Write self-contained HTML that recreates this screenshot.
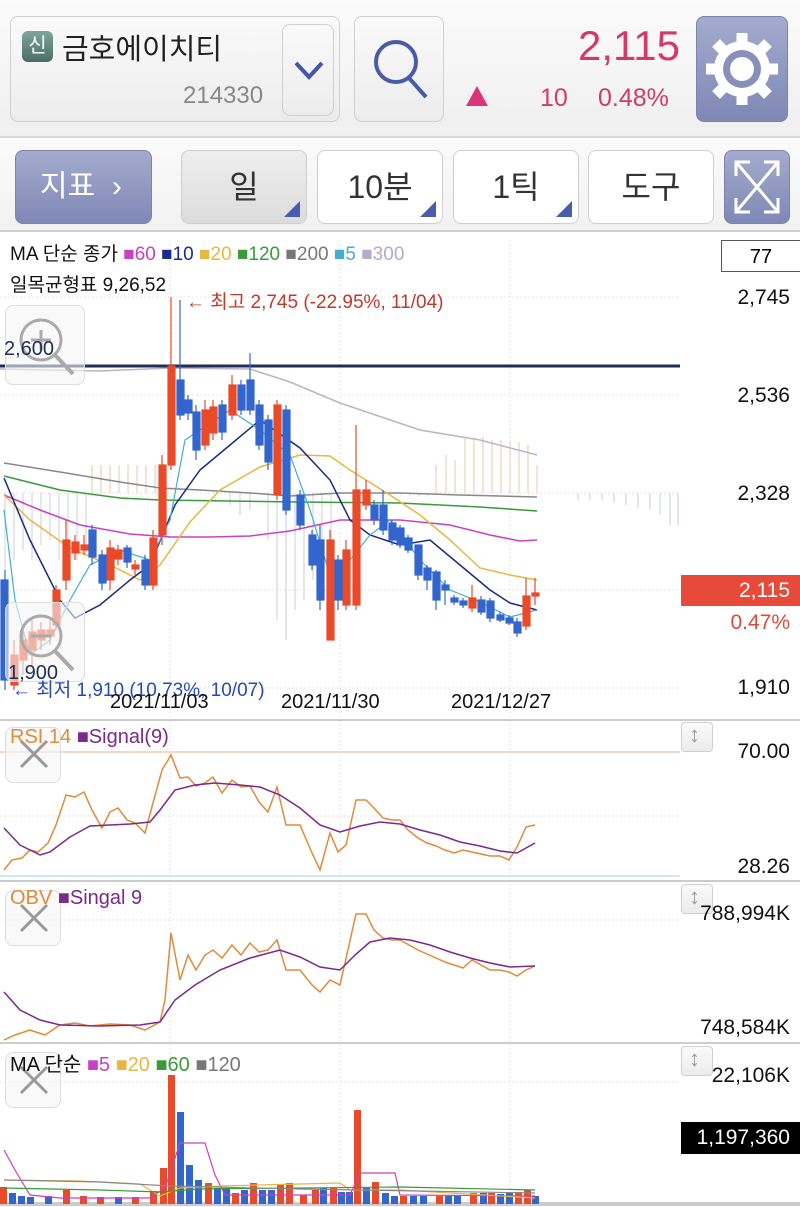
<!DOCTYPE html>
<html><head><meta charset="utf-8"><style>
*{margin:0;padding:0;box-sizing:border-box}
body{width:800px;height:1207px;overflow:hidden;background:#fff;font-family:"Liberation Sans","Noto Sans CJK KR",sans-serif;position:relative}
.a{position:absolute}
.btn{position:absolute;border:1px solid #cfcfcf;border-radius:8px;background:linear-gradient(#fafafa,#ececec)}
.bl{position:absolute;border-radius:8px;background:linear-gradient(#a4abcd,#7f88b5);border:1px solid #7c84ad}
.tb{font-size:32px;color:#333;text-align:center;line-height:72px}
.tri{position:absolute;right:6px;bottom:6px;width:0;height:0;border-left:16px solid transparent;border-bottom:16px solid #4a5cb0}
.r{position:absolute;right:10px;font-size:21px;color:#111;text-align:right}
.zb{position:absolute;left:5px;width:56px;height:56px;border:1px solid #ddd;border-radius:8px;background:rgba(245,245,245,.6)}
</style></head><body>
<div class="a" style="left:0;top:0;width:800px;height:138px;background:linear-gradient(#fbfbfb,#efefef);border-bottom:2px solid #d8d8d8"></div>
<div class="btn" style="left:10px;top:16px;width:330px;height:106px"></div>
<div class="a" style="left:22px;top:31px;width:31px;height:31px;border-radius:6px;background:linear-gradient(#7fa59a,#4b6e64);color:#fff;font-size:20px;text-align:center;line-height:31px">신</div>
<div class="a" style="left:62px;top:26px;font-size:29px;color:#222">금호에이치티</div>
<div class="a" style="left:183px;top:82px;font-size:24px;color:#888">214330</div>
<div class="btn" style="left:282px;top:24px;width:52px;height:92px"></div>
<svg class="a" style="left:292px;top:58px" width="34" height="26"><path d="M4 5 L17 19 L30 5" stroke="#4356a8" stroke-width="4" fill="none"/></svg>
<div class="btn" style="left:354px;top:16px;width:90px;height:106px"></div>
<svg class="a" style="left:368px;top:30px" width="70" height="80"><circle cx="28" cy="32" r="20" stroke="#4a5aa8" stroke-width="4" fill="none"/><line x1="41" y1="48" x2="58" y2="67" stroke="#4a5aa8" stroke-width="4"/></svg>
<div class="a" style="left:560px;top:22px;font-size:42px;color:#d33a6a;width:120px;text-align:right">2,115</div>
<div class="a" style="left:466px;top:86px;width:0;height:0;border-left:11px solid transparent;border-right:11px solid transparent;border-bottom:20px solid #d9357a"></div>
<div class="a" style="left:540px;top:84px;font-size:25px;color:#d33a6a">10</div>
<div class="a" style="left:598px;top:84px;font-size:25px;color:#d33a6a">0.48%</div>
<div class="bl" style="left:696px;top:16px;width:92px;height:106px"></div>
<svg class="a" style="left:700px;top:25px" width="84" height="88" viewBox="0 0 84 88"><g fill="#fff"><circle cx="42" cy="44" r="28"/><g stroke="#fff" stroke-width="11"><line x1="42" y1="8" x2="42" y2="80"/><line x1="6" y1="44" x2="78" y2="44"/><line x1="16" y1="18" x2="68" y2="70"/><line x1="68" y1="18" x2="16" y2="70"/></g></g><circle cx="42" cy="44" r="19" fill="#8790bb"/><circle cx="42" cy="44" r="12" fill="#fff"/></svg>

<div class="a" style="left:0;top:140px;width:800px;height:92px;background:linear-gradient(#fafafa,#f2f2f2);border-bottom:2px solid #d0d0d0"></div>
<div class="bl" style="left:15px;top:150px;width:137px;height:74px;color:#fff;font-size:30px;line-height:72px;padding-left:24px">지표 &nbsp;›</div>
<div class="btn tb" style="left:181px;top:150px;width:126px;height:74px;background:linear-gradient(#eee,#dcdcdc)">일<div class="tri"></div></div>
<div class="btn tb" style="left:317px;top:150px;width:126px;height:74px;background:#fff">10분<div class="tri"></div></div>
<div class="btn tb" style="left:453px;top:150px;width:126px;height:74px;background:#fff">1틱<div class="tri"></div></div>
<div class="btn tb" style="left:588px;top:150px;width:126px;height:74px;background:#fff">도구</div>
<div class="bl" style="left:724px;top:150px;width:66px;height:74px"></div>
<svg class="a" style="left:732px;top:158px" width="50" height="58"><g stroke="#fff" stroke-width="3" fill="none"><path d="M4 4L46 54M46 4L4 54M4 18V4H18M32 4H46V18M4 40V54H18M32 54H46V40"/></g></svg>

<svg class="a" style="left:0;top:233px" width="800" height="974" viewBox="0 233 800 974">
<g stroke="#e6e6e6" stroke-dasharray="2 2" stroke-width="1">
<line x1="0" y1="297" x2="680" y2="297"/><line x1="0" y1="395" x2="680" y2="395"/><line x1="0" y1="493" x2="680" y2="493"/><line x1="0" y1="590" x2="680" y2="590"/><line x1="0" y1="688" x2="680" y2="688"/>
<line x1="170" y1="240" x2="170" y2="1200"/><line x1="340" y1="240" x2="340" y2="1200"/><line x1="510" y1="240" x2="510" y2="1200"/>
<line x1="0" y1="816" x2="680" y2="816"/><line x1="0" y1="920" x2="680" y2="920"/><line x1="0" y1="1082" x2="680" y2="1082"/>
</g>
<line x1="0" y1="720" x2="800" y2="720" stroke="#999"/><line x1="0" y1="881" x2="800" y2="881" stroke="#999"/><line x1="0" y1="1043" x2="800" y2="1043" stroke="#999"/>
<line x1="0" y1="1204" x2="800" y2="1204" stroke="#ccc" stroke-width="4"/>
<line x1="0" y1="752" x2="680" y2="752" stroke="#f2d9c8" stroke-width="2"/>
<line x1="0" y1="876" x2="680" y2="876" stroke="#bde3f0" stroke-width="1.5"/>
<g stroke="#e8c9a8" stroke-width="1">
<path d="M92 465V493M101 465V493M110 465V493M119 465V493M128 465V493M137 465V493M146 465V493M155 465V493M401 495V493M410 496V493M419 496V493M428 496V493M465 437V493M474 437V493M483 437V493M492 440V493M501 440V493M510 442V493M519 442V493M528 445V493M537 465V493M436 465V493M446 455V493M455 460V493"/>
</g>
<g stroke="#c9cde0" stroke-width="1">
<path d="M5 493V590M14 493V560M23 493V550M32 493V560M41 493V545M50 493V540M59 493V560M68 493V550M77 493V560M86 493V555M230 493V505M240 493V515M250 493V510M268 493V540M277 493V620M286 493V640M295 493V610M304 493V600M313 493V580M322 493V560M331 493V600M578 493V500M590 493V500M602 493V500M614 493V503M626 493V505M638 493V508M650 493V510M660 493V515M670 493V525M678 493V525"/>
</g>
<polyline fill="none" stroke="#bbb3c9" stroke-width="1.5" points="0,369 100,371 170,368 250,369 290,382 340,403 420,430 480,440 537,455"/>
<polyline fill="none" stroke="#888" stroke-width="1.5" points="4,463 60,472 120,482 160,488 200,490 250,493 290,496 340,493 400,493 460,495 537,497"/>
<polyline fill="none" stroke="#3a9a3a" stroke-width="1.5" points="4,476 60,490 120,498 160,500 300,502 400,503 480,507 537,511"/>
<polyline fill="none" stroke="#c941c2" stroke-width="1.5" points="4,495 40,510 80,525 130,534 170,537 210,537 250,536 290,531 340,520 400,520 450,525 490,535 520,541 537,540"/>
<polyline fill="none" stroke="#e8b740" stroke-width="1.5" points="4,495 30,520 70,548 110,565 140,580 160,565 190,522 220,490 260,467 300,455 330,456 350,470 390,495 420,515 450,540 480,568 510,575 537,580"/>
<polyline fill="none" stroke="#1a2a80" stroke-width="1.5" points="4,478 30,540 60,600 75,618 100,605 130,580 150,565 175,505 200,470 230,445 260,420 300,448 330,480 350,520 370,535 400,545 430,540 460,565 490,590 510,603 537,610"/>
<polyline fill="none" stroke="#3fb0d0" stroke-width="1.2" points="4,510 15,600 30,655 50,640 70,600 90,565 120,550 150,560 170,520 185,440 200,430 230,410 260,430 290,455 310,510 330,575 350,560 370,535 390,520 420,560 450,590 480,602 510,617 537,610"/>
<line x1="0" y1="366" x2="680" y2="366" stroke="#1e2e55" stroke-width="3"/>
<g stroke-width="1.2">
<g fill="#e84a2a" stroke="#e84a2a">
<path d="M14 640V690M23 630V675M32 620V665M41 622V650M50 620V645M56 585V630M66 520V590M75 535V560M84 535V555M110 540V590M118 545V565M135 560V575M153 530V590M162 455V545M171 297V470M205 400V450M213 400V440M232 375V420M277 400V500M330 530V640M346 540V610M356 425V610M366 480V510M472 585V612M526 578V630M535 578V605"/>
<rect x="11" y="655" width="7" height="30"/><rect x="20" y="640" width="7" height="20"/><rect x="29" y="632" width="7" height="18"/><rect x="38" y="630" width="7" height="10"/><rect x="47" y="630" width="7" height="6"/><rect x="53" y="590" width="7" height="35"/><rect x="63" y="540" width="7" height="40"/><rect x="72" y="542" width="7" height="11"/><rect x="81" y="545" width="7" height="5"/><rect x="107" y="548" width="7" height="32"/><rect x="115" y="550" width="7" height="9"/><rect x="132" y="565" width="7" height="4"/><rect x="150" y="538" width="7" height="47"/><rect x="159" y="465" width="7" height="70"/><rect x="168" y="366" width="7" height="99"/><rect x="202" y="410" width="7" height="35"/><rect x="210" y="407" width="7" height="26"/><rect x="229" y="385" width="7" height="30"/><rect x="274" y="405" width="7" height="90"/><rect x="327" y="540" width="7" height="100"/><rect x="343" y="550" width="7" height="55"/><rect x="353" y="490" width="7" height="115"/><rect x="363" y="490" width="7" height="15"/><rect x="469" y="598" width="7" height="10"/><rect x="523" y="596" width="7" height="30"/><rect x="532" y="593" width="7" height="3"/>
</g>
<g fill="#3366cc" stroke="#3366cc">
<path d="M5 570V690M92 525V565M102 550V590M127 545V568M145 555V590M180 300V420M188 395V420M196 405V460M222 400V440M241 380V415M250 353V415M259 400V450M268 415V470M286 405V515M300 490V530M312 530V570M320 525V610M338 555V610M374 500V525M383 490V535M392 520V545M400 525V548M408 535V553M418 545V580M427 565V590M436 570V610M445 580V605M454 595V605M463 598V608M481 596V615M490 598V622M500 612V622M509 615V625M517 618V637"/>
<rect x="1" y="580" width="7" height="100"/><rect x="89" y="530" width="7" height="27"/><rect x="99" y="555" width="7" height="28"/><rect x="124" y="548" width="7" height="14"/><rect x="142" y="560" width="7" height="25"/><rect x="177" y="380" width="7" height="35"/><rect x="185" y="400" width="7" height="13"/><rect x="193" y="412" width="7" height="38"/><rect x="219" y="405" width="7" height="27"/><rect x="238" y="385" width="7" height="25"/><rect x="247" y="380" width="7" height="30"/><rect x="256" y="405" width="7" height="40"/><rect x="265" y="420" width="7" height="42"/><rect x="283" y="410" width="7" height="100"/><rect x="297" y="495" width="7" height="30"/><rect x="309" y="535" width="7" height="30"/><rect x="317" y="540" width="7" height="60"/><rect x="335" y="560" width="7" height="40"/><rect x="371" y="505" width="7" height="15"/><rect x="380" y="505" width="7" height="25"/><rect x="389" y="523" width="7" height="17"/><rect x="397" y="528" width="7" height="17"/><rect x="405" y="538" width="7" height="12"/><rect x="415" y="545" width="7" height="30"/><rect x="424" y="568" width="7" height="12"/><rect x="433" y="572" width="7" height="28"/><rect x="442" y="585" width="7" height="5"/><rect x="451" y="598" width="7" height="4"/><rect x="460" y="601" width="7" height="4"/><rect x="478" y="600" width="7" height="12"/><rect x="487" y="601" width="7" height="17"/><rect x="497" y="615" width="7" height="5"/><rect x="506" y="618" width="7" height="5"/><rect x="514" y="622" width="7" height="11"/>
</g>
</g>
<polyline fill="none" stroke="#e08a3a" stroke-width="1.5" points="4,870 12,860 22,858 30,850 38,852 48,843 56,825 66,795 75,797 84,792 92,810 102,828 110,812 118,808 127,820 135,823 145,833 153,803 162,770 171,755 180,778 188,777 196,786 205,783 213,777 222,793 232,780 241,787 250,786 259,802 268,812 277,787 286,825 300,825 312,853 320,870 330,833 338,852 346,845 356,800 366,800 374,808 383,818 392,820 400,820 408,830 418,838 427,843 436,846 445,850 454,853 463,850 472,852 481,854 490,856 500,856 509,860 517,847 526,827 535,825"/>
<polyline fill="none" stroke="#7a2a8a" stroke-width="1.5" points="4,828 20,845 40,855 50,852 70,837 90,826 110,825 130,824 150,822 160,810 175,790 195,785 215,783 240,785 260,787 280,795 300,808 320,825 340,832 360,826 380,822 400,824 420,830 440,835 460,842 480,846 500,851 517,853 535,843"/>
<polyline fill="none" stroke="#e08a3a" stroke-width="1.5" points="4,1040 15,1035 30,1030 45,1035 60,1025 75,1023 90,1026 110,1024 130,1025 145,1030 160,1022 165,1000 171,933 180,980 188,955 196,970 205,955 213,950 222,958 232,945 241,955 250,943 259,952 268,950 277,940 286,970 300,970 312,985 320,992 330,980 340,985 356,914 366,914 374,930 383,938 392,940 400,940 418,950 436,958 445,962 454,965 463,968 472,960 481,965 490,970 500,970 509,972 517,976 526,970 535,966"/>
<polyline fill="none" stroke="#7a2a8a" stroke-width="1.5" points="4,992 20,1010 40,1020 60,1025 100,1026 140,1025 160,1022 175,1000 195,985 220,970 250,958 280,950 300,957 320,967 340,970 355,955 370,942 390,938 410,940 430,945 450,952 470,958 490,963 510,967 535,966"/>
<g fill="#e84a2a"><rect x="0" y="1187" width="7" height="17"/><rect x="63" y="1190" width="7" height="14"/><rect x="80" y="1196" width="7" height="8"/><rect x="97" y="1197" width="7" height="7"/><rect x="132" y="1197" width="7" height="7"/><rect x="150" y="1191" width="7" height="13"/><rect x="160" y="1168" width="7" height="36"/><rect x="168" y="1075" width="7" height="129"/><rect x="205" y="1183" width="7" height="21"/><rect x="232" y="1193" width="7" height="11"/><rect x="250" y="1183" width="7" height="21"/><rect x="277" y="1185" width="7" height="19"/><rect x="286" y="1183" width="7" height="21"/><rect x="300" y="1195" width="7" height="9"/><rect x="312" y="1190" width="7" height="14"/><rect x="330" y="1188" width="7" height="16"/><rect x="354" y="1110" width="7" height="94"/><rect x="372" y="1182" width="7" height="22"/><rect x="400" y="1196" width="7" height="8"/><rect x="436" y="1196" width="7" height="8"/><rect x="470" y="1193" width="7" height="11"/><rect x="488" y="1193" width="7" height="11"/><rect x="515" y="1192" width="7" height="12"/><rect x="524" y="1190" width="7" height="14"/></g>
<g fill="#3366cc"><rect x="9" y="1193" width="7" height="11"/><rect x="18" y="1196" width="7" height="8"/><rect x="27" y="1197" width="7" height="7"/><rect x="45" y="1196" width="7" height="8"/><rect x="115" y="1197" width="7" height="7"/><rect x="177" y="1112" width="7" height="92"/><rect x="186" y="1165" width="7" height="39"/><rect x="195" y="1180" width="7" height="24"/><rect x="214" y="1188" width="7" height="16"/><rect x="223" y="1188" width="7" height="16"/><rect x="241" y="1190" width="7" height="14"/><rect x="259" y="1190" width="7" height="14"/><rect x="268" y="1190" width="7" height="14"/><rect x="320" y="1188" width="7" height="16"/><rect x="338" y="1192" width="7" height="12"/><rect x="346" y="1192" width="7" height="12"/><rect x="363" y="1188" width="7" height="16"/><rect x="382" y="1193" width="7" height="11"/><rect x="391" y="1196" width="7" height="8"/><rect x="410" y="1196" width="7" height="8"/><rect x="420" y="1196" width="7" height="8"/><rect x="445" y="1196" width="7" height="8"/><rect x="454" y="1196" width="7" height="8"/><rect x="480" y="1193" width="7" height="11"/><rect x="497" y="1194" width="7" height="10"/><rect x="506" y="1193" width="7" height="11"/><rect x="532" y="1196" width="7" height="8"/></g>
<polyline fill="none" stroke="#c941c2" stroke-width="1.2" points="4,1150 15,1170 30,1195 60,1198 100,1198 150,1198 165,1188 180,1143 205,1143 215,1175 225,1195 350,1195 360,1173 395,1173 400,1195 535,1196"/>
<polyline fill="none" stroke="#e8b740" stroke-width="1.2" points="4,1180 80,1181 140,1184 160,1196 180,1188 220,1186 340,1183 350,1190 400,1190 535,1198"/>
<polyline fill="none" stroke="#3a9a3a" stroke-width="1.2" points="4,1188 100,1190 160,1192 200,1189 400,1187 535,1190"/>
<polyline fill="none" stroke="#888" stroke-width="1.2" points="4,1180 100,1182 170,1186 300,1189 535,1193"/>
</svg>

<div class="zb" style="top:305px;width:80px;height:80px"></div>
<svg class="a" style="left:15px;top:312px" width="62" height="66"><circle cx="26" cy="28" r="20" stroke="#aaa" stroke-width="3" fill="none"/><line x1="40" y1="43" x2="58" y2="62" stroke="#aaa" stroke-width="4"/><line x1="26" y1="18" x2="26" y2="38" stroke="#aaa" stroke-width="3"/><line x1="16" y1="28" x2="36" y2="28" stroke="#aaa" stroke-width="3"/></svg>
<div class="zb" style="top:602px;width:80px;height:80px"></div>
<svg class="a" style="left:15px;top:608px" width="62" height="66"><circle cx="26" cy="28" r="20" stroke="#aaa" stroke-width="3" fill="none"/><line x1="40" y1="43" x2="58" y2="62" stroke="#aaa" stroke-width="4"/><line x1="16" y1="28" x2="36" y2="28" stroke="#aaa" stroke-width="3"/></svg>
<div class="zb" style="top:727px"></div><div class="zb" style="top:890px"></div><div class="zb" style="top:1052px"></div>
<svg class="a" style="left:18px;top:738px" width="32" height="32"><path d="M3 3L29 29M29 3L3 29" stroke="#999" stroke-width="3"/></svg>
<svg class="a" style="left:18px;top:902px" width="32" height="32"><path d="M3 3L29 29M29 3L3 29" stroke="#999" stroke-width="3"/></svg>
<svg class="a" style="left:18px;top:1064px" width="32" height="32"><path d="M3 3L29 29M29 3L3 29" stroke="#999" stroke-width="3"/></svg>
<div class="btn" style="left:681px;top:722px;width:32px;height:30px;border-radius:4px"></div>
<div class="btn" style="left:681px;top:884px;width:32px;height:30px;border-radius:4px"></div>
<div class="btn" style="left:681px;top:1046px;width:32px;height:30px;border-radius:4px"></div>
<div class="a" style="left:689px;top:722px;font-size:22px;color:#999">↕</div>
<div class="a" style="left:689px;top:884px;font-size:22px;color:#999">↕</div>
<div class="a" style="left:689px;top:1046px;font-size:22px;color:#999">↕</div>

<div class="a" style="left:10px;top:239px;font-size:19px;color:#111;white-space:nowrap">MA 단순 종가 <span style="color:#c941c2">■60</span> <span style="color:#1a2a90">■10</span> <span style="color:#e8b740">■20</span> <span style="color:#3a9a3a">■120</span> <span style="color:#777">■200</span> <span style="color:#3fb0d0">■5</span> <span style="color:#b4aacb">■300</span></div>
<div class="a" style="left:10px;top:270px;font-size:19px;color:#111">일목균형표 9,26,52</div>
<div class="a" style="left:186px;top:287px;font-size:19px;color:#c0392b;white-space:nowrap">← 최고 2,745 (-22.95%, 11/04)</div>
<div class="a" style="left:4px;top:338px;font-size:20px;color:#1e2e55">2,600</div>
<div class="a" style="left:8px;top:662px;font-size:20px;color:#1e2e55">1,900</div>
<div class="a" style="left:12px;top:675px;font-size:19px;color:#2748b8;white-space:nowrap">← 최저 1,910 (10.73%, 10/07)</div>
<div class="a" style="left:110px;top:691px;font-size:20px;color:#111">2021/11/03</div>
<div class="a" style="left:281px;top:691px;font-size:20px;color:#111">2021/11/30</div>
<div class="a" style="left:451px;top:691px;font-size:20px;color:#111">2021/12/27</div>
<div class="a" style="left:10px;top:726px;font-size:20px;color:#e08a3a">RSI 14 <span style="color:#7a2a8a">■Signal(9)</span></div>
<div class="a" style="left:10px;top:887px;font-size:20px;color:#e08a3a">OBV <span style="color:#7a2a8a">■Singal 9</span></div>
<div class="a" style="left:10px;top:1048px;font-size:20px;color:#111">MA 단순 <span style="color:#c941c2">■5</span> <span style="color:#e8b740">■20</span> <span style="color:#3a9a3a">■60</span> <span style="color:#777">■120</span></div>

<div class="a" style="left:721px;top:240px;width:80px;height:32px;border:1px solid #555;font-size:20px;text-align:center;line-height:32px">77</div>
<div class="r" style="top:286px">2,745</div>
<div class="r" style="top:384px">2,536</div>
<div class="r" style="top:482px">2,328</div>
<div class="a" style="left:681px;top:575px;width:119px;height:31px;background:#e84a3a;color:#fff;font-size:21px;text-align:right;padding-right:10px;line-height:31px">2,115</div>
<div class="r" style="top:611px;color:#e0483a">0.47%</div>
<div class="r" style="top:676px">1,910</div>
<div class="r" style="top:740px">70.00</div>
<div class="r" style="top:855px">28.26</div>
<div class="r" style="top:902px">788,994K</div>
<div class="r" style="top:1016px">748,584K</div>
<div class="r" style="top:1064px">22,106K</div>
<div class="a" style="left:681px;top:1122px;width:119px;height:32px;background:#000;color:#fff;font-size:21px;text-align:right;padding-right:10px;line-height:32px">1,197,360</div>
</body></html>
